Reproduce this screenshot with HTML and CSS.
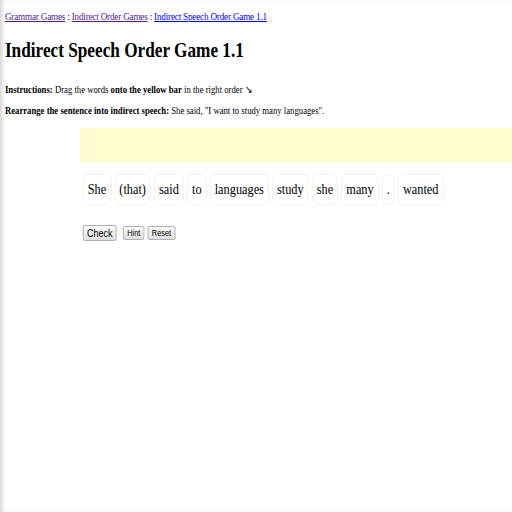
FILE: index.html
```html
<!DOCTYPE html>
<html>
<head>
<meta charset="utf-8">
<link rel="stylesheet" href="styles.css">
</head>
<body>
<div class="page">
  <div class="crumbs"><a href="#" class="visited">Grammar Games</a> : <a href="#" class="visited">Indirect Order Games</a> : <a href="#">Indirect Speech Order Game 1.1</a></div>
  <h1>Indirect Speech Order Game 1.1</h1>
  <p class="line first"><b>Instructions:</b> Drag the words <b>onto the yellow bar</b> in the right order <span class="arrow">&#x2198;</span></p>
  <p class="line"><b>Rearrange the sentence into indirect speech:</b> She said, "I want to study many languages".</p>
  <div class="game">
    <div class="bar"></div>
    <div class="words">
      <span class="w">She</span><span class="w">(that)</span><span class="w">said</span><span class="w">to</span><span class="w">languages</span><span class="w">study</span><span class="w">she</span><span class="w">many</span><span class="w">.</span><span class="w">wanted</span>
    </div>
    <div class="btns"><button class="check">Check</button><button class="small">Hint</button><button class="small">Reset</button></div>
  </div>
</div>
</body>
</html>
```

FILE: styles.css
```css
html { margin: 0; padding: 0; background: #fff; overflow: hidden; }
body {
  margin: 0;
  padding: 0;
  font-family: "Liberation Serif", serif;
  color: #000;
  min-height: 512px;
  overflow: hidden;
  box-shadow: inset 4px 0 4px -2px #cfcfcf;
}
.page {
  width: 625px;
  padding: 10px 0 0 6px;
  box-sizing: border-box;
  transform: scaleX(0.82);
  transform-origin: 0 0;
}
.crumbs { font-size: 11.2px; letter-spacing: -0.25px; }
.crumbs a { color: #0000ee; }
.crumbs a.visited { color: #551a8b; }
h1 { font-size: 21px; margin: 16px 0 20px; }
.line { font-size: 10.6px; margin: 0; }
.line.first { margin-bottom: 9.5px; }
.game { margin: 12px 0 0 92px; }
.bar { height: 35px; background: #fffdd0; }
.words { display: flex; gap: 4px; margin: 11px 0 0 3px; }
.w {
  font-size: 15px;
  padding: 6px 5px;
  border: 1px solid #efefef;
  border-radius: 6px;
}
.btns { margin: 20px 0 0 3px; display: flex; align-items: center; gap: 6px; }
button {
  font-family: "Liberation Sans", sans-serif;
  color: #000;
  background: linear-gradient(#fbfbfb, #dedede);
  border: 1px solid #a9a9a9;
  border-radius: 2px;
  margin: 0;
}
.check { font-size: 11px; padding: 1px 4px; margin-right: 2px; }
.small { font-size: 9px; padding: 1px 4px; }
.small + .small { margin-left: -2px; }
```
